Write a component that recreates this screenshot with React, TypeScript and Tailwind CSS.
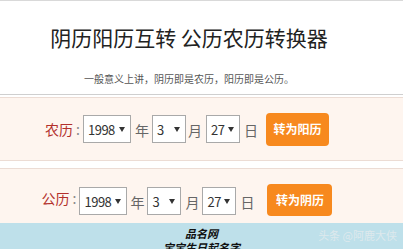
import React from "react";

const CJK = { fontFamily: '"Noto Sans CJK SC", "Noto Sans", sans-serif' };

function Arrow() {
  return (
    <svg width="6" height="5" viewBox="0 0 6 5" aria-hidden>
      <polygon points="0,0 6,0 3,5" fill="#333" />
    </svg>
  );
}

function Sel({ value, wide }: { value: string; wide?: boolean }) {
  return (
    <div
      className={
        wide
          ? "flex h-[28px] w-[48px] items-center justify-between border border-[#a9a9a9] bg-white pl-[4px] pr-[5px] text-[13px] leading-none tracking-[-0.5px] text-[#333]"
          : "flex h-[28px] w-[34px] items-center justify-between border border-[#a9a9a9] bg-white pl-[4px] pr-[5px] text-[13px] leading-none tracking-[-0.5px] text-[#333]"
      }
    >
      <span>{value}</span>
      <Arrow />
    </div>
  );
}

function Unit({ ch }: { ch: string }) {
  return <span className="text-[14px] leading-none text-[#666]">{ch}</span>;
}

export default function App() {
  return (
    <div className="h-[250px] w-full overflow-hidden bg-white" style={CJK}>
      {/* heading */}
      <div className="flex h-[95px] flex-col items-center border-t border-b border-t-[#d9d9d9] border-b-[#cfcfcf] border-b-dotted pr-[25px]">
        <h1 className="mt-[25px] text-[21px] leading-[22px] font-normal text-[#222]">
          阴历阳历互转 公历农历转换器
        </h1>
        <p className="mt-[26px] text-[10px] leading-[10px] text-[#555]">
          一般意义上讲，阴历即是农历，阳历即是公历。
        </p>
      </div>

      {/* lunar -> solar */}
      <div className="mt-[2px] flex h-[64px] items-center justify-center border-y border-[#ecdcd4] bg-[#fef5ef] pr-[29px]">
        <span className="text-[14px] leading-none text-[#b3302c]">农历</span>
        <span className="px-[3px] text-[14px] leading-none text-[#888]">:</span>
        <Sel value="1998" wide />
        <span className="ml-[4px] mr-[3px]"><Unit ch="年" /></span>
        <Sel value="3" />
        <span className="ml-[2px] mr-[4px]"><Unit ch="月" /></span>
        <Sel value="27" />
        <span className="ml-[4px] mr-[8px]"><Unit ch="日" /></span>
        <button className="h-[33px] w-[63px] rounded-[4px] bg-[#f7891e] text-[12px] font-bold text-white">
          转为阳历
        </button>
      </div>

      {/* solar -> lunar */}
      <div className="mt-[7px] flex h-[55px] items-start justify-center border-t border-[#ecdcd4] bg-[#fef5ef] pt-[15px] pr-[29px]">
        <span className="mt-[7px] text-[14px] leading-none text-[#b3302c]">公历</span>
        <span className="mt-[7px] px-[3px] text-[14px] leading-none text-[#888]">:</span>
        <div className="mt-[3px] flex items-center">
          <Sel value="1998" wide />
          <span className="ml-[3px] mr-[3px]"><Unit ch="年" /></span>
          <Sel value="3" />
          <span className="ml-[4px] mr-[3px]"><Unit ch="月" /></span>
          <Sel value="27" />
          <span className="ml-[4px] mr-[13px]"><Unit ch="日" /></span>
        </div>
        <button className="h-[32px] w-[65px] rounded-[4px] bg-[#f7891e] text-[12px] font-bold text-white">
          转为阴历
        </button>
      </div>

      {/* image strip */}
      <div className="relative flex h-[26px] flex-col items-center overflow-hidden bg-[#bee0ea] pt-[3px]">
        <span className="text-[11px] leading-[14px] font-bold italic text-[#111]">品名网</span>
        <span className="text-[11px] leading-[14px] font-bold italic text-[#111]">宝宝生日起名字</span>
        <span className="absolute right-[6px] top-[7px] text-[11px] leading-none text-[#dde9ed]">
          头条 @阿鹿大侠
        </span>
      </div>
    </div>
  );
}
